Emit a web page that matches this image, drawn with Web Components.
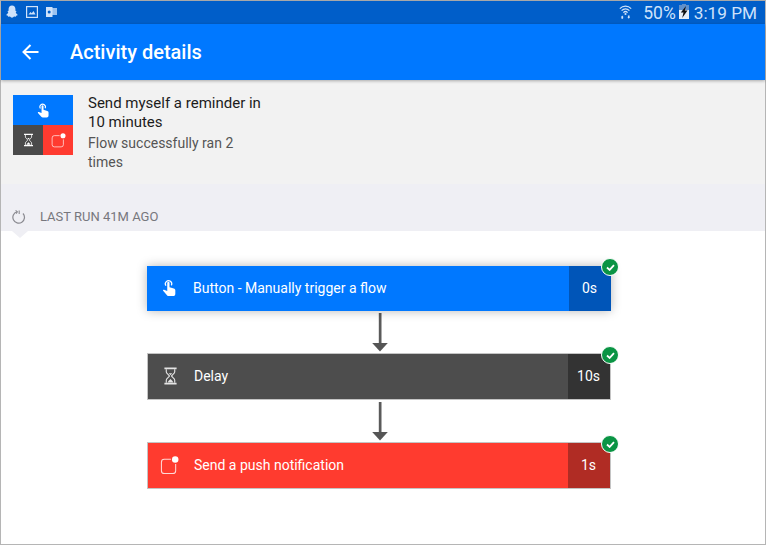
<!DOCTYPE html>
<html lang="en">
<head>
<meta charset="utf-8">
<title>Activity details</title>
<style>
  html, body { margin: 0; padding: 0; background: #fff; }
  body { width: 766px; height: 545px; overflow: hidden; font-family: Roboto, "Liberation Sans", sans-serif; }
</style>
</head>
<body>
<flow-page></flow-page>

<template id="status-bar-tpl">
  <style>
    :host { display: flex; align-items: center; height: 23px; background: #005ec9; color: #cfe2fa; padding: 0 8px 0 5px; }
    .left { display: flex; align-items: center; gap: 8px; margin-bottom: 2px; }
    .right { margin-left: auto; display: flex; align-items: center; font: 17.5px Roboto, "Liberation Sans", sans-serif; }
    svg { display: block; }
    .wifi { margin-bottom: 3px; }
    .pct { margin-left: 11px; }
    .time { margin-left: 5px; font-size: 17.2px; }
    .batt { margin: 0 0 3px 3px; }
  </style>
  <div class="left">
    <svg width="12" height="13" viewBox="0 0 12 13"><path d="M6 .5c2.200 0 3.400 1.500 3.400 3.600v1.600l1.300.5-1 .9c.3 1.600 1.300 2.300 2.300 2.800l-1.800.8-.4 1-1.600-.1c-.7.4-1.300 1.100-2.200 1.100s-1.500-.7-2.200-1.100l-1.600.1-.4-1L0 9.900c1-.5 2-1.200 2.300-2.800l-1-.9 1.300-.5V4.100C2.600 2 3.800.5 6 .5z" fill="#cfe2fa"/></svg>
    <svg width="12" height="12" viewBox="0 0 12 12"><rect x=".6" y=".6" width="10.800" height="10.800" fill="none" stroke="#cfe2fa" stroke-width="1.200"/><path d="M2.500 8.500l2-2.500 1.300 1.300L7.500 5l2 3.500z" fill="#cfe2fa"/></svg>
    <svg width="11" height="10" viewBox="0 0 11 10"><rect x="4" y="1" width="7" height="7" fill="#9cc2ef"/><rect x="0" y="0" width="6.500" height="10" fill="#cfe2fa"/><circle cx="3.200" cy="5" r="1.500" fill="#005ec9"/></svg>
  </div>
  <div class="right">
    <svg class="wifi" width="13" height="15" viewBox="0 0 16 18"><g fill="none" stroke="#cfe2fa" stroke-width="1.500"><path d="M1 5.500c4-4 10-4 14 0"/><path d="M3.200 8c2.800-2.800 6.800-2.800 9.600 0"/><path d="M5.400 10.300c1.500-1.500 3.700-1.500 5.200 0"/></g><circle cx="8" cy="12" r="1.300" fill="#cfe2fa"/><path d="M4 14l1.700 2.200H5V18H3v-1.800h-.7zM12 18l-1.700-2.200h.7V14h2v1.800h.7z" fill="#cfe2fa"/></svg>
    <span class="pct">50%</span>
    <svg class="batt" width="10" height="15" viewBox="0 0 10 15"><rect x="0" y="1" width="10" height="14" fill="#e8eef6"/><rect x="0" y="1" width="10" height="5" fill="#5f8fca"/><rect x="3" y="0" width="4" height="1" fill="#5f8fca"/><path d="M7 2L1.800 8.500h2.700L3.200 14 8.500 6.500H5.800z" fill="#111"/></svg>
    <span class="time">3:19 PM</span>
  </div>
</template>

<template id="app-bar-tpl">
  <style>
    :host { display: flex; align-items: center; height: 56px; background: #0078ff; color: #fff; box-shadow: 0 1px 3px rgba(0,0,0,.3); position: relative; padding-left: 21px; }
    svg { display: block; }
    h1 { margin: 0 0 0 31px; font: 500 20px Roboto, "Liberation Sans", sans-serif; }
  </style>
  <svg width="17" height="16" viewBox="0 0 17 16"><path d="M16.500 8H2M8.500 1L1.500 8l7 7" fill="none" stroke="#fff" stroke-width="2"/></svg>
  <h1><slot></slot></h1>
</template>

<template id="flow-summary-tpl">
  <style>
    :host { display: flex; height: 104px; background: #f2f2f2; padding: 15px 0 0 12px; box-sizing: border-box; }
    .tile { width: 60px; height: 60px; display: grid; grid-template-columns: 30px 30px; grid-template-rows: 30px 30px; color: #fff; }
    .tile div { display: flex; align-items: center; justify-content: center; }
    .a { grid-column: 1 / 3; background: #0078ff; }
    .b { background: #4a4a4a; }
    .c { background: #ff3b30; }
    .text { margin: -1px 0 0 15px; width: 180px; }
    .title { font: 15px/19px Roboto, "Liberation Sans", sans-serif; color: #1c1c1c; }
    .sub { font: 14px/19px Roboto, "Liberation Sans", sans-serif; color: #555; margin-top: 2px; }
  </style>
  <div class="tile">
    <div class="a"><flow-icon name="touch" width="13" height="17"></flow-icon></div>
    <div class="b"><flow-icon name="glass" width="11" height="14"></flow-icon></div>
    <div class="c"><flow-icon name="push" width="15" height="15"></flow-icon></div>
  </div>
  <div class="text">
    <div class="title"><slot name="title"></slot></div>
    <div class="sub"><slot name="sub"></slot></div>
  </div>
</template>

<template id="run-band-tpl">
  <style>
    :host { display: flex; align-items: center; position: relative; height: 47px; background: #efeff4; padding: 18px 0 1px 11px; box-sizing: border-box; color: #77777d; font: 13px Roboto, "Liberation Sans", sans-serif; }
    svg { display: block; }
    span { margin-left: 14px; }
    :host::after { content: ""; position: absolute; left: 11px; bottom: -7px; border: 8px solid transparent; border-bottom: 0; border-top: 7px solid #efeff4; }
  </style>
  <svg width="14" height="15" viewBox="0 0 14 15"><path d="M5 2.800A5.800 5.800 0 1 0 11 4.500" fill="none" stroke="#8a8a90" stroke-width="1.200"/><path d="M7.200 1.500v3.600M3.600 1.300L5.400 2.800 4 4.600" fill="none" stroke="#8a8a90" stroke-width="1.100"/></svg>
  <span><slot></slot></span>
</template>

<template id="flow-step-tpl">
  <style>
    :host { display: flex; position: relative; height: 47px; width: 464px; box-sizing: border-box; color: #fff; background: var(--bg); border: 1px solid #c4c4c4; font: 14px Roboto, "Liberation Sans", sans-serif; }
    :host([flat]) { border: 0; height: 45px; box-shadow: 0 0 10px rgba(0,0,0,.28); }
    .icon { width: 45px; display: flex; align-items: center; justify-content: center; flex: none; padding-bottom: 1px; box-sizing: border-box; }
    .label { flex: 1; display: flex; align-items: center; padding: 0 0 2px 1px; }
    .time { width: 42px; flex: none; display: flex; align-items: center; justify-content: center; background: var(--dark); padding: 0 1px 2px 0; box-sizing: border-box; }
    .ok { position: absolute; right: -9px; top: -8px; width: 16px; height: 16px; border-radius: 50%; background: #0a9444; border: 1px solid #fff; display: flex; align-items: center; justify-content: center; box-sizing: content-box; }
    :host([flat]) .ok { right: -8px; }
    svg { display: block; }
  </style>
  <div class="icon"><slot name="icon"></slot></div>
  <div class="label"><slot></slot></div>
  <div class="time"><slot name="time"></slot></div>
  <div class="ok"><svg width="9" height="7" viewBox="0 0 10 8"><path d="M1 4l3 2.800L9 1.200" fill="none" stroke="#fff" stroke-width="2"/></svg></div>
</template>

<template id="flow-arrow-tpl">
  <style>
    :host { display: block; width: 16px; height: 42px; margin-left: 2px; }
    svg { display: block; }
  </style>
  <svg width="16" height="42" viewBox="0 0 16 42"><rect x="6.800" y="2" width="2.700" height="32" fill="#5a5a5a"/><path d="M.2 32h15.600L8 40.500z" fill="#555"/></svg>
</template>

<template id="flow-page-tpl">
  <style>
    :host { display: block; width: 766px; height: 545px; box-sizing: border-box; border: 1px solid #b5b5b5; border-top-color: #a8a8a8; background: #fff; }
    .flow { display: flex; flex-direction: column; padding: 35px 0 0 146px; align-items: flex-start; }
    .arrow-wrap { width: 464px; display: flex; justify-content: center; }
  </style>
  <status-bar></status-bar>
  <app-bar>Activity details</app-bar>
  <flow-summary>
    <span slot="title">Send myself a reminder in 10 minutes</span>
    <span slot="sub">Flow successfully ran 2 times</span>
  </flow-summary>
  <run-band>LAST RUN 41M AGO</run-band>
  <div class="flow">
    <flow-step flat style="--bg:#0078ff;--dark:#0055b8">
      <flow-icon slot="icon" name="touch" width="15" height="20"></flow-icon>
      Button - Manually trigger a flow
      <span slot="time">0s</span>
    </flow-step>
    <div class="arrow-wrap"><flow-arrow></flow-arrow></div>
    <flow-step style="--bg:#4d4d4d;--dark:#333">
      <flow-icon slot="icon" name="glass" width="15" height="20" style="color:#e4e4e4;margin-right:1px"></flow-icon>
      Delay
      <span slot="time">10s</span>
    </flow-step>
    <div class="arrow-wrap"><flow-arrow></flow-arrow></div>
    <flow-step style="--bg:#ff3b2f;--dark:#b02c24">
      <flow-icon slot="icon" name="push" width="19" height="19" style="margin-right:2px"></flow-icon>
      Send a push notification
      <span slot="time">1s</span>
    </flow-step>
  </div>
</template>

<script>
  // connector icons, <use> can't reach across shadow roots so each one gets its own copy
  const ICONS = {
    touch: {
      box: "0 0 16 20",
      body: `<path d="M4.200 7.600A3.400 3.400 0 1 1 10 7.200" fill="none" stroke="currentColor" stroke-width="1.300"/>
        <path d="M5.600 4.600a1.200 1.200 0 0 1 2.400 0v4.600l4.600 1.300c1 .3 1.600 1 1.600 2V16c0 1.300-.9 2.500-2.300 2.500H7.200c-.8 0-1.400-.3-1.900-.9L1.200 13c-.5-.6.2-1.500 1-1.200l3.400 1.400z" fill="currentColor"/>`,
    },
    glass: {
      box: "0 0 16 20",
      body: `<path d="M1.500 1h13v1.800h-13zM1.500 17.200h13V19h-13z" fill="currentColor"/>
        <path d="M3.500 2.800v2.800c0 1.600 2.800 3 3.400 4.400-.6 1.400-3.400 2.800-3.400 4.400v2.800M12.500 2.800v2.800c0 1.600-2.800 3-3.400 4.400.6 1.400 3.400 2.800 3.400 4.400v2.800" fill="none" stroke="currentColor" stroke-width="1.200"/>
        <path d="M6.200 7h3.600L8 9.200zM5 16.800c.3-1.500 2.200-2.400 3-3.600.8 1.200 2.700 2.100 3 3.600z" fill="currentColor"/>`,
    },
    push: {
      box: "0 0 20 20",
      body: `<path d="M11.500 3.500H4.500a3 3 0 0 0-3 3v9a3 3 0 0 0 3 3h9a3 3 0 0 0 3-3V8.500" fill="none" stroke="currentColor" stroke-opacity=".8" stroke-width="1.100"/>
        <circle cx="16" cy="3.600" r="3.400" fill="currentColor"/>`,
    },
  };

  class FlowIcon extends HTMLElement {
    connectedCallback() {
      if (this.shadowRoot) return;
      const icon = ICONS[this.getAttribute("name")];
      const w = this.getAttribute("width");
      const h = this.getAttribute("height");
      this.attachShadow({ mode: "open" }).innerHTML = `
        <style>:host { display: block; } svg { display: block; }</style>
        <svg width="${w}" height="${h}" viewBox="${icon.box}">${icon.body}</svg>`;
    }
  }
  customElements.define("flow-icon", FlowIcon);

  // the rest just stamp their own template into an open shadow root
  function register(tag) {
    const tpl = document.getElementById(tag + "-tpl");
    customElements.define(tag, class extends HTMLElement {
      constructor() {
        super();
        this.attachShadow({ mode: "open" }).appendChild(tpl.content.cloneNode(true));
      }
    });
  }
  ["status-bar", "app-bar", "flow-summary", "run-band", "flow-step", "flow-arrow", "flow-page"].forEach(register);
</script>
</body>
</html>
